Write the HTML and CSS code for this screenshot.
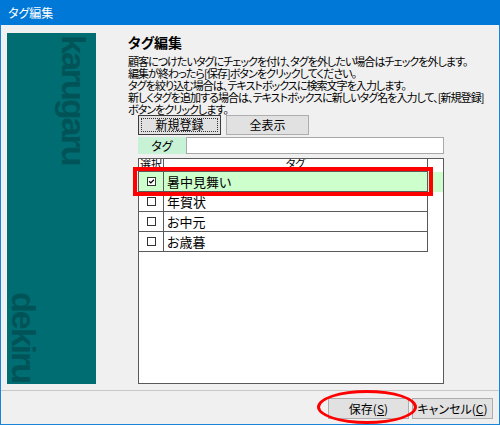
FILE: index.html
```html
<!DOCTYPE html>
<html lang="ja">
<head>
<meta charset="utf-8">
<title>タグ編集</title>
<link rel="stylesheet" href="styles.css">
</head>
<body>
<div class="window">
  <div class="titlebar">タグ編集</div>
  <div class="client">
    <div class="main">
      <div class="side">
        <span class="brand brand-top">karugaru</span>
        <span class="brand brand-bottom">dekiru</span>
      </div>
      <div class="content">
        <h1 class="heading">タグ編集</h1>
        <div class="desc">
          <p>顧客につけたいタグにチェックを付け、タグを外したい場合はチェックを外します。</p>
          <p>編集が終わったら[保存]ボタンをクリックしてください。</p>
          <p>タグを絞り込む場合は、テキストボックスに検索文字を入力します。</p>
          <p>新しくタグを追加する場合は、テキストボックスに新しいタグ名を入力して、[新規登録]</p>
          <p>ボタンをクリックします。</p>
        </div>
        <div class="toolbar">
          <button class="btn btn-focus"><span class="focus-rect">新規登録</span></button>
          <button class="btn">全表示</button>
        </div>
        <div class="search">
          <span class="search-label">タグ</span>
          <span class="search-input"></span>
        </div>
        <div class="grid">
          <div class="grid-head">
            <span class="cell c1">選択</span>
            <span class="cell c2">タグ</span>
          </div>
          <div class="row selected">
            <span class="cell c1"><span class="chk"><svg viewBox="0 0 9 9" width="9" height="9"><path d="M1.5 4.2 L3.6 6.3 L7.6 2.2" fill="none" stroke="#000" stroke-width="1.6"/></svg></span></span>
            <span class="cell c2">暑中見舞い</span>
          </div>
          <div class="row">
            <span class="cell c1"><span class="chk"></span></span>
            <span class="cell c2">年賀状</span>
          </div>
          <div class="row">
            <span class="cell c1"><span class="chk"></span></span>
            <span class="cell c2">お中元</span>
          </div>
          <div class="row">
            <span class="cell c1"><span class="chk"></span></span>
            <span class="cell c2">お歳暮</span>
          </div>
          <div class="mark-rect"></div>
        </div>
      </div>
    </div>
    <div class="footer">
      <button class="btn btn-foot">保存(<u>S</u>)</button>
      <button class="btn btn-foot">キャンセル(<u>C</u>)</button>
      <div class="mark-ellipse"></div>
    </div>
  </div>
</div>
</body>
</html>
```

FILE: styles.css
```css
* { box-sizing: border-box; }
html, body {
  margin: 0;
  padding: 0;
  background: #ffffff;
}
body {
  font-family: "Noto Sans CJK JP", "Noto Sans", sans-serif;
  font-feature-settings: "palt";
  color: #000;
}
.window {
  width: 500px;
  height: 425px;
  display: flex;
  flex-direction: column;
  border: 1px solid #1a84d8;
  border-top: none;
  background: #f0f0f0;
}
.titlebar {
  height: 25px;
  margin: 0 -1px;
  background: #0078d7;
  color: #fff;
  font-size: 12px;
  line-height: 25px;
  padding-left: 8px;
  flex: none;
}
.client {
  flex: 1;
  display: flex;
  flex-direction: column;
}
.main {
  height: 365px;
  display: flex;
  padding: 8px 0 0 6px;
}
.side {
  width: 89px;
  height: 351px;
  background: #006d72;
  display: flex;
  flex-direction: column;
  justify-content: space-between;
  overflow: hidden;
  flex: none;
}
.brand {
  writing-mode: vertical-rl;
  font-family: "Liberation Sans", Arial, sans-serif;
  font-feature-settings: normal;
  font-weight: bold;
  font-size: 34px;
  line-height: 34px;
  color: #005458;
  letter-spacing: -2px;
}
.brand-top {
  align-self: flex-end;
  margin: 2px 5px 0 0;
}
.brand-bottom {
  align-self: flex-start;
  margin: 0 0 2px 0;
}
.content {
  margin-left: 32px;
  display: flex;
  flex-direction: column;
  white-space: nowrap;
  min-width: 0;
}
.heading {
  margin: 0;
  font-size: 14px;
  line-height: 18px;
  font-weight: bold;
}
.desc {
  margin-top: 4px;
  font-size: 11px;
  line-height: 12px;
  letter-spacing: -0.95px;
}
.desc p { margin: 0; }
.toolbar {
  display: flex;
  gap: 5px;
  margin: 0 0 0 10px;
}
.btn {
  font-family: "Noto Sans CJK JP", "Noto Sans", sans-serif;
  font-feature-settings: "palt";
  font-size: 12px;
  color: #000;
  background: #e1e1e1;
  border: 1px solid #adadad;
  width: 83px;
  height: 20px;
  padding: 0;
  line-height: 16px;
  display: flex;
  align-items: center;
  justify-content: center;
}
.btn-focus {
  border-color: #3c3c3c;
  padding: 2px;
}
.focus-rect {
  width: 100%;
  height: 100%;
  border: 1px dotted #333;
  display: flex;
  align-items: center;
  justify-content: center;
}
.search {
  display: flex;
  margin: 2px 0 0 10px;
  height: 17px;
}
.search-label {
  width: 48px;
  background: #c8f2d6;
  font-size: 12px;
  line-height: 17px;
  text-align: center;
}
.search-input {
  width: 258px;
  background: #fff;
  border: 1px solid #a8a8a8;
}
.grid {
  position: relative;
  margin: 4px 0 0 10px;
  width: 306px;
  height: 226px;
  background: #fff;
  border: 1px solid #5a5a5a;
}
.grid-head, .row {
  display: flex;
}
.grid-head {
  height: 13px;
  overflow: hidden;
  font-size: 11px;
  line-height: 9px;
}
.grid-head .cell {
  border-bottom: 1px solid #5a5a5a;
}
.grid-head .c2 {
  text-align: center;
}
.cell {
  display: block;
}
.c1 {
  width: 25px;
  border-right: 1px solid #5a5a5a;
  padding-left: 1px;
}
.c2 {
  width: 264px;
  border-right: 1px solid #5a5a5a;
}
.row {
  height: 20px;
  font-size: 13px;
  line-height: 19px;
}
.row .cell {
  border-bottom: 1px solid #5a5a5a;
}
.row .c1 {
  display: flex;
  align-items: center;
  justify-content: center;
  padding: 0;
}
.row .c2 {
  padding-left: 3px;
}
.row.selected {
  background: #ccffcc;
}
.chk {
  width: 9px;
  height: 9px;
  border: 1px solid #333;
  background: #fff;
  display: flex;
  align-items: center;
  justify-content: center;
}
.chk svg { display: block; }
.mark-rect {
  position: absolute;
  left: -6px;
  top: 8px;
  width: 300px;
  height: 29px;
  border: 4px solid #ff0000;
}
.footer {
  position: relative;
  flex: 1;
  border-top: 1px solid #c8c8c8;
  display: flex;
  justify-content: flex-end;
  align-items: flex-start;
  gap: 3px;
  padding: 7px 6px 0 0;
}
.btn-foot {
  width: 81px;
  height: 21px;
}
.mark-ellipse {
  position: absolute;
  left: 316px;
  top: -1px;
  width: 100px;
  height: 34px;
  border: 3px solid #ff0000;
  border-radius: 50%;
}
```
